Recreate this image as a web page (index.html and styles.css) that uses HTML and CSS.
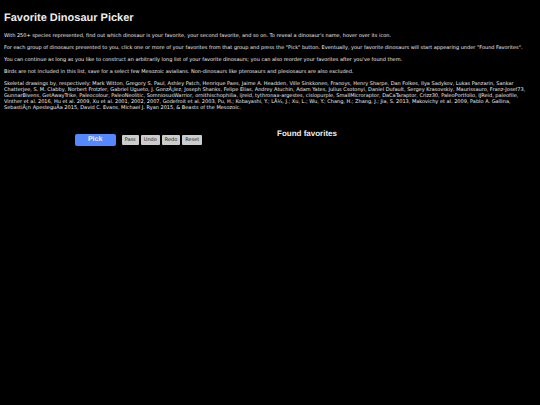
FILE: index.html
```html
<!DOCTYPE html>
<html lang="en">
<head>
    <meta charset="UTF-8">
    <meta name="viewport" content="width=device-width, initial-scale=1.0">
    <title>Favorite Dinosaur Picker</title>
    <link rel="stylesheet" href="styles.css">
</head>
<body>
    <h1>Favorite Dinosaur Picker</h1>

    <p>With 250+ species represented, find out which dinosaur is your favorite, your second favorite, and so on. To reveal a dinosaur's name, hover over its icon.</p>
    <p>For each group of dinosaurs presented to you, click one or more of your favorites from that group and press the "Pick" button. Eventually, your favorite dinosaurs will start appearing under "Found Favorites".</p>
    <p>You can continue as long as you like to construct an arbitrarily long list of your favorite dinosaurs; you can also reorder your favorites after you've found them.</p>
    <p>Birds are not included in this list, save for a select few Mesozoic avialians. Non-dinosaurs like pterosaurs and plesiosaurs are also excluded.</p>
    <p>Skeletal drawings by, respectively: Mark Witton, Gregory S. Paul, Ashley Patch, Henrique Paes, Jaime A. Headden, Ville Sinkkonen, Franoys, Henry Sharpe, Dan Folkes, Ilya Sadykov, Lukas Panzarin, Sankar Chatterjee, S. M. Clabby, Norbert Frotzler, Gabriel Ugueto, J. GonzÃ¡lez, Joseph Shanks, Felipe Elias, Andrey Atuchin, Adam Yates, Julius Csotonyi, Daniel Dufault, Sergey Krasovskiy, Maurissauro, Franz-Josef73, GunnarBivens, GetAwayTrike, Paleocolour, PaleoNeolitic, SomniosusWarrior, ornithischophilia, ijreid, tythronax-argestes, cisiopurple, SmallMicroraptor, DaCaTaraptor, Crizz30, PaleoPortfolio, IJReid, paleofile, Vinther et al. 2016, Hu et al. 2009, Xu et al. 2001, 2002, 2007, Godefroit et al. 2003, Pu, H.; Kobayashi, Y.; LÃ¼, J.; Xu, L.; Wu, Y.; Chang, H.; Zhang, J.; Jia, S. 2013, Makovichy et al. 2009, Pablo A. Gallina, SebastiÃ¡n ApesteguÃ­a 2015, David C. Evans, Michael J. Ryan 2015, &amp; Beasts of the Mesozoic.</p>

    <main class="picker">
        <section class="actions">
            <button type="button" class="pick">Pick</button>
            <div class="secondary">
                <button type="button">Pass</button>
                <button type="button">Undo</button>
                <button type="button">Redo</button>
                <button type="button">Reset</button>
            </div>
        </section>
        <section class="favorites">
            <h2>Found favorites</h2>
        </section>
    </main>
</body>
</html>
```

FILE: styles.css
```css
body {
    margin: 12px 4px;
    background-color: #000;
    color: #eee;
    font-family: "Liberation Sans", Arial, sans-serif;
    font-size: 6px;
    line-height: 6px;
    text-rendering: geometricPrecision;
}

h1 {
    margin: 0 0 8px;
    font-size: 11px;
    line-height: 13px;
}

p {
    margin: 0 0 6px;
    font-family: "DejaVu Sans", Verdana, sans-serif;
    font-size: 5px;
}

.picker {
    display: grid;
    grid-template-columns: 1fr 1fr;
    gap: 14px;
    margin-top: 18px;
}

.actions {
    display: flex;
    justify-content: center;
    align-items: flex-start;
    gap: 6px;
    padding: 5px 0 0 10px;
}

.secondary {
    display: flex;
    gap: 2px;
    padding-top: 1px;
}

button {
    padding: 0 3px;
    border: none;
    border-radius: 1px;
    background-color: #ccc;
    color: #222;
    font-family: "DejaVu Sans", Verdana, sans-serif;
    font-size: 5px;
    line-height: 10px;
    text-rendering: inherit;
    cursor: pointer;
}

.pick {
    width: 41px;
    padding: 0;
    border-radius: 2px;
    background-color: #58f;
    color: #eee;
    font-family: "Liberation Sans", Arial, sans-serif;
    font-size: 7px;
    font-weight: bold;
    line-height: 12px;
}

h2 {
    margin: 0;
    font-size: 8px;
    line-height: 10px;
}
```
